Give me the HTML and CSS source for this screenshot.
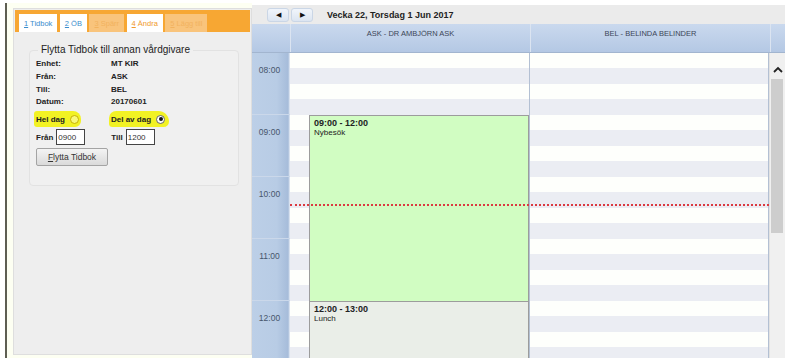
FILE: index.html
```html
<!DOCTYPE html>
<html lang="sv">
<head>
    <meta charset="UTF-8">
    <title>Flytta Tidbok</title>
    <link rel="stylesheet" href="styles.css">
</head>
<body>
<div class="page">

    <!-- Left: tabs and form -->
    <div class="side">
        <div class="panel">
            <div class="tabs">
                <span class="tab"><u>1</u> Tidbok</span>
                <span class="tab"><u>2</u> ÖB</span>
                <span class="tab off"><u>3</u> Spärr</span>
                <span class="tab active"><u>4</u> Ändra</span>
                <span class="tab off"><u>5</u> Lägg till</span>
            </div>

            <fieldset class="move">
                <legend>Flytta Tidbok till annan vårdgivare</legend>
                <div class="info">
                    <span>Enhet:</span><span>MT KIR</span>
                    <span>Från:</span><span>ASK</span>
                    <span>Till:</span><span>BEL</span>
                    <span>Datum:</span><span>20170601</span>
                </div>
                <div class="opts">
                    <label class="mark mark-a">Hel dag <span class="radio"></span></label>
                    <label class="mark mark-b">Del av dag <span class="radio on"></span></label>
                </div>
                <div class="times">
                    <label class="t-from">Från <input type="text" value="0900"></label>
                    <label class="t-to">Till <input type="text" value="1200"></label>
                </div>
                <button class="move-btn"><u>F</u>lytta Tidbok</button>
            </fieldset>
        </div>
    </div>

    <!-- Right: day calendar -->
    <div class="cal">
        <div class="toolbar">
            <span class="nav">&#9664;</span>
            <span class="nav">&#9654;</span>
            <span class="title">Vecka 22, Torsdag 1 Jun 2017</span>
        </div>
        <div class="head">
            <div class="hcell"></div>
            <div class="hcell">ASK - DR AMBJÖRN ASK</div>
            <div class="hcell">BEL - BELINDA BELINDER</div>
            <div class="hcell"></div>
        </div>
        <div class="body">
            <div class="times-col">
                <div class="hour">08:00</div>
                <div class="hour">09:00</div>
                <div class="hour">10:00</div>
                <div class="hour">11:00</div>
                <div class="hour">12:00</div>
            </div>
            <div class="day">
                <div class="event visit">
                    <b>09:00 - 12:00</b>
                    <span>Nybesök</span>
                </div>
                <div class="event lunch">
                    <b>12:00 - 13:00</b>
                    <span>Lunch</span>
                </div>
            </div>
            <div class="day"></div>
            <div class="scroll">
                <svg class="up" width="10" height="7" viewBox="0 0 10 7"><path d="M1 6 L5 2 L9 6" fill="none" stroke="#222" stroke-width="1.8"/></svg>
                <div class="thumb"></div>
            </div>
            <div class="now"></div>
        </div>
    </div>

</div>
</body>
</html>
```

FILE: styles.css
```css
body {
    margin: 0;
    background: #fff;
    font-family: "Liberation Sans", Arial, sans-serif;
    color: #222;
}
.page {
    display: flex;
    height: 362px;
    overflow: hidden;
}

/* left side */
.side {
    margin: 3px 0 0 5px;
    height: 355px;
    border-left: 2px solid #5e5e52;
    padding-left: 6px;
    background: #fdfff2;
}
.panel {
    box-sizing: border-box;
    width: 239px;
    height: 347px;
    margin-top: 5px;
    padding: 1px;
    border: 1px solid #dedede;
    background: #eeeeee;
}
.tabs {
    display: flex;
    gap: 2.5px;
    height: 22px;
    box-sizing: border-box;
    padding: 4px 0 0 4px;
    background: #f7a733;
}
.tab {
    height: 18px;
    line-height: 19px;
    padding: 0 5px;
    font-size: 7.5px;
    background: #fff;
    color: #3b8ccd;
}
.tab.off {
    background: #f9c47c;
    color: #f2b25e;
}
.tab.active {
    color: #f09a2c;
}

.move {
    margin: 12px 0 0 14px;
    width: 210px;
    height: 142px;
    box-sizing: border-box;
    padding: 2px 6px 0;
    border: 1px solid #e2e2e2;
    border-radius: 4px;
    background: #f0f0f0;
}
.move legend {
    padding: 0 3px;
    margin-left: 2px;
    font-size: 10px;
    line-height: 12px;
    color: #222;
}
.info {
    display: grid;
    grid-template-columns: 75px auto;
    font-size: 8px;
    font-weight: bold;
    line-height: 12.8px;
}
.opts {
    display: flex;
    margin-top: 2px;
    height: 16px;
    font-size: 8px;
    font-weight: bold;
}
.mark {
    display: flex;
    align-items: center;
    background: #f2f224;
    border-radius: 6px;
    padding: 0 2px 0 2px;
    margin-left: -2px;
}
.mark-a {
    width: 43px;
    border-radius: 3px 8px 6px 3px;
}
.mark-b {
    margin-left: 28px;
    width: 56px;
    border-radius: 8px 12px 6px 4px;
}
.radio {
    width: 7px;
    height: 7px;
    margin-left: 5px;
    border: 1px solid #c7b200;
    border-radius: 50%;
    background: #f9f97a;
    position: relative;
}
.radio.on {
    background: #fff;
    border-color: #666;
}
.radio.on::after {
    content: "";
    position: absolute;
    left: 1.5px;
    top: 1.5px;
    width: 4px;
    height: 4px;
    border-radius: 50%;
    background: #111;
}
.times {
    display: flex;
    margin-top: 2px;
    font-size: 8px;
    font-weight: bold;
}
.times label {
    display: flex;
    align-items: center;
}
.times input {
    box-sizing: border-box;
    width: 29px;
    height: 16px;
    margin-left: 3px;
    padding: 0 1px;
    border: 1px solid #444;
    font-family: "Liberation Sans", Arial, sans-serif;
    font-size: 8px;
    color: #333;
}
.t-to {
    margin-left: 26px;
}
.move-btn {
    display: block;
    margin-top: 3px;
    width: 72px;
    height: 18px;
    padding: 0;
    border: 1px solid #a4a4a4;
    border-radius: 2px;
    background: linear-gradient(#f4f4f4, #dadada);
    font-family: "Liberation Sans", Arial, sans-serif;
    font-size: 8.5px;
    color: #333;
}

/* calendar */
.cal {
    display: flex;
    flex-direction: column;
    width: 533px;
    height: 353px;
    margin-top: 5px;
    overflow: hidden;
}
.toolbar {
    display: flex;
    align-items: center;
    height: 19px;
    flex: none;
    padding-left: 15px;
    background: #ebebeb;
}
.nav {
    box-sizing: border-box;
    width: 22px;
    height: 14px;
    margin-right: 2px;
    border: 1px solid #cad6e6;
    border-radius: 3px;
    background: linear-gradient(#f1f5fb, #dce5f1);
    font-size: 7px;
    line-height: 12px;
    text-align: center;
    color: #111;
}
.title {
    margin-left: 12px;
    font-size: 9px;
    font-weight: bold;
    color: #222;
}
.head {
    display: grid;
    grid-template-columns: 38px 240px 240px 15px;
    height: 28px;
    flex: none;
    border-bottom: 1px solid #a2b5cf;
    background: linear-gradient(#cad9ee, #b4c8e4);
}
.hcell {
    padding-top: 5px;
    font-size: 7.5px;
    text-align: center;
    color: #3c4657;
    border-left: 1px solid #dbe4f1;
}
.hcell:first-child {
    border-left: none;
}
.body {
    position: relative;
    display: grid;
    grid-template-columns: 38px 240px 239px 16px;
    flex: 1;
    overflow: hidden;
}
.times-col {
    background: linear-gradient(to right, #bccfe7 0%, #b8cce5 65%, #a6bcda 95%, #e9eef6 100%);
}
.hour {
    box-sizing: border-box;
    height: 62px;
    padding: 12px 3px 0 0;
    font-size: 8.5px;
    line-height: 10px;
    text-align: center;
    color: #47566c;
    border-bottom: 1px solid #cbd8ea;
}
.day {
    position: relative;
    border-right: 1px solid #b3c0d3;
    background: repeating-linear-gradient(#fefffc 0 15.5px, #ebedf3 15.5px 31px);
}
.event {
    position: absolute;
    left: 19px;
    right: 0;
    box-sizing: border-box;
    padding: 2px 4px;
    border: 1px solid #9c9c9c;
    font-size: 8px;
    line-height: 10px;
}
.event b {
    display: block;
    font-size: 9px;
}
.visit {
    top: 62px;
    height: 187px;
    background: #d1fdc2;
}
.lunch {
    top: 248px;
    height: 80px;
    background: #eaeee8;
}
.scroll {
    position: relative;
    background: #f0f0f0;
    border-left: 1px solid #e2e2e2;
}
.up {
    position: absolute;
    left: 3px;
    top: 13px;
}
.thumb {
    position: absolute;
    left: 1px;
    top: 26px;
    width: 12px;
    height: 154px;
    background: #cdcdcd;
}
.now {
    position: absolute;
    left: 38px;
    right: 16px;
    top: 151px;
    border-top: 2px dotted #dc3a40;
}
```
